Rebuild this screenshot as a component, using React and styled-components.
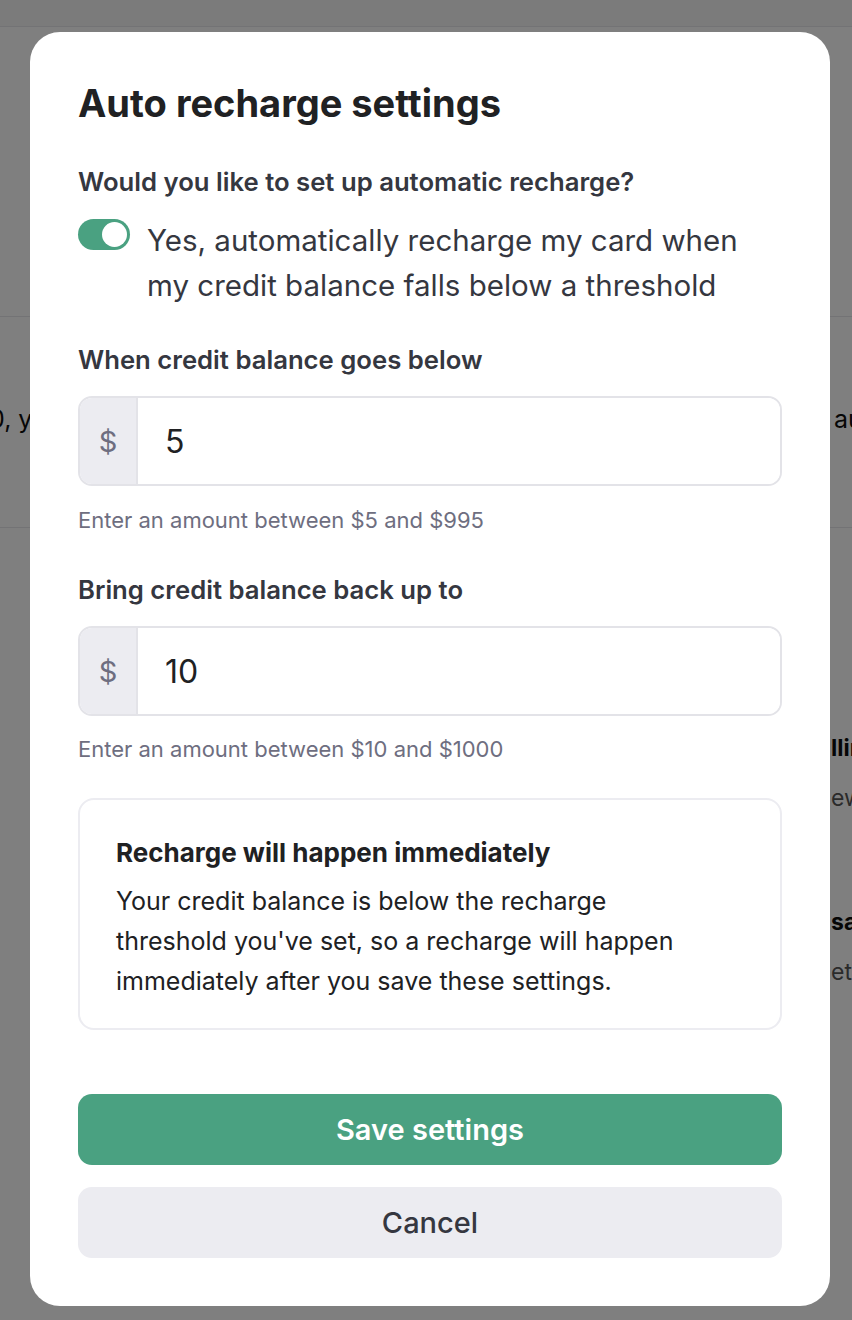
import { useState } from 'react';
import styled, { createGlobalStyle } from 'styled-components';

const GlobalStyle = createGlobalStyle`
  * {
    box-sizing: border-box;
  }
  body {
    margin: 0;
    background: #fff;
    color: #202123;
    font-family: Inter, "Noto Sans", sans-serif;
  }
`;

// page behind the dialog, mostly hidden by it
const Page = styled.div`
  height: 1320px;
  overflow: hidden;
  background: #fff;
`;

const TopBar = styled.div`
  height: 27px;
  background: #f6f6f7;
  border-bottom: 1px solid #e6e6ea;
`;

const Band = styled.div`
  height: ${({ h }) => h}px;
  border-bottom: ${({ line }) => (line ? '1px solid #e6e6ea' : 'none')};
  padding-top: ${({ top }) => top || 0}px;
`;

const SplitRow = styled.div`
  display: flex;
  justify-content: space-between;
  font-size: 25px;
  line-height: 30px;
  color: #0d0d0d;
  white-space: nowrap;
`;

const Clipped = styled.span`
  margin-left: ${({ left }) => left || 0}px;
  margin-right: ${({ right }) => right || 0}px;
`;

const Aside = styled.div`
  display: grid;
  grid-template-columns: 831px 1fr;
  padding-top: 205px;
`;

const AsideCol = styled.div`
  grid-column: 2;
  display: flex;
  flex-direction: column;
  white-space: nowrap;
`;

const AsideTitle = styled.div`
  font-size: 23px;
  line-height: 30px;
  font-weight: 700;
  color: #0d0d0d;
  margin-top: ${({ mt }) => mt || 0}px;
`;

const AsideText = styled.div`
  font-size: 23px;
  line-height: 28px;
  color: #555;
  margin-top: 21px;
`;

// dialog
const Overlay = styled.div`
  position: fixed;
  inset: 0;
  background: rgba(0, 0, 0, 0.5);
  display: flex;
  justify-content: center;
  align-items: flex-start;
  padding: 32px 0 0 8px;
`;

const Dialog = styled.div`
  width: 800px;
  height: 1274px;
  background: #fff;
  border-radius: 30px;
  padding: 50px 48px 48px;
  display: flex;
  flex-direction: column;
`;

const Title = styled.h2`
  margin: 0;
  font-size: 38px;
  line-height: 42px;
  font-weight: 700;
  color: #202123;
`;

const Label = styled.div`
  font-size: 25.7px;
  line-height: 30px;
  font-weight: 600;
  color: #353740;
  margin-top: ${({ mt }) => mt}px;
`;

const ToggleRow = styled.label`
  display: flex;
  gap: 17px;
  margin-top: 22px;
  cursor: pointer;
`;

const Track = styled.span`
  flex: none;
  width: 52px;
  height: 31px;
  border-radius: 16px;
  background: ${({ on }) => (on ? '#4aa181' : '#d9d9e3')};
  position: relative;
  transition: background 0.15s;
`;

const Knob = styled.span`
  position: absolute;
  top: 3px;
  left: ${({ on }) => (on ? '24px' : '3px')};
  width: 25px;
  height: 25px;
  border-radius: 50%;
  background: #fff;
  transition: left 0.15s;
`;

const ToggleText = styled.span`
  font-size: 29.5px;
  line-height: 45px;
  color: #353740;
  margin-top: -1px;
`;

const Field = styled.div`
  display: flex;
  flex: none;
  height: 90px;
  margin-top: 21px;
  border: 2px solid #e3e3e8;
  border-radius: 14px;
  overflow: hidden;
`;

const Prefix = styled.span`
  width: 58px;
  flex: none;
  display: flex;
  align-items: center;
  justify-content: center;
  background: #ececf1;
  border-right: 2px solid #e3e3e8;
  font-size: 29px;
  color: #6e6e80;
`;

const AmountInput = styled.input`
  flex: 1;
  min-width: 0;
  border: none;
  outline: none;
  padding: 0 27px;
  font-family: inherit;
  font-size: 32px;
  color: #202123;
  background: #fff;
`;

const Hint = styled.div`
  font-size: 22px;
  line-height: 28px;
  color: #6e6e80;
  margin-top: ${({ mt }) => mt}px;
`;

const Notice = styled.div`
  flex: none;
  margin-top: 35px;
  border: 2px solid #ececf1;
  border-radius: 16px;
  padding: 38px 36px 27px;
`;

const NoticeTitle = styled.div`
  font-size: 26px;
  line-height: 30px;
  font-weight: 700;
  color: #202123;
`;

const NoticeText = styled.p`
  margin: 13px 0 0;
  max-width: 590px;
  font-size: 25px;
  line-height: 40px;
  color: #202123;
`;

const Button = styled.button`
  height: 71px;
  width: 100%;
  flex: none;
  border: none;
  border-radius: 14px;
  font-family: inherit;
  font-size: 29px;
  font-weight: ${({ primary }) => (primary ? 600 : 500)};
  color: ${({ primary }) => (primary ? '#fff' : '#353740')};
  background: ${({ primary }) => (primary ? '#4aa181' : '#ececf1')};
  margin-top: ${({ mt }) => mt}px;
  cursor: pointer;
`;

function App() {
  const [auto, setAuto] = useState(true);
  const [below, setBelow] = useState('5');
  const [upTo, setUpTo] = useState('10');

  return (
    <>
      <GlobalStyle />
      <Page>
        <TopBar />
        <Band h={290} line />
        <Band h={211} line top={87}>
          <SplitRow>
            <Clipped left={-11}>0, y</Clipped>
            <Clipped right={-19}>aut</Clipped>
          </SplitRow>
        </Band>
        <Aside>
          <AsideCol>
            <AsideTitle>llin</AsideTitle>
            <AsideText>ew</AsideText>
            <AsideTitle mt={95}>sa</AsideTitle>
            <AsideText>et r</AsideText>
          </AsideCol>
        </Aside>
      </Page>

      <Overlay>
        <Dialog>
          <Title>Auto recharge settings</Title>

          <Label mt={43}>Would you like to set up automatic recharge?</Label>
          <ToggleRow onClick={() => setAuto(!auto)}>
            <Track on={auto ? 1 : 0}>
              <Knob on={auto ? 1 : 0} />
            </Track>
            <ToggleText>
              Yes, automatically recharge my card when my credit balance falls below a threshold
            </ToggleText>
          </ToggleRow>

          <Label mt={37}>When credit balance goes below</Label>
          <Field>
            <Prefix>$</Prefix>
            <AmountInput value={below} onChange={(e) => setBelow(e.target.value)} />
          </Field>
          <Hint mt={20}>Enter an amount between $5 and $995</Hint>

          <Label mt={41}>Bring credit balance back up to</Label>
          <Field>
            <Prefix>$</Prefix>
            <AmountInput value={upTo} onChange={(e) => setUpTo(e.target.value)} />
          </Field>
          <Hint mt={19}>Enter an amount between $10 and $1000</Hint>

          <Notice>
            <NoticeTitle>Recharge will happen immediately</NoticeTitle>
            <NoticeText>
              Your credit balance is below the recharge threshold you've set, so a recharge will happen
              immediately after you save these settings.
            </NoticeText>
          </Notice>

          <Button primary mt={64}>Save settings</Button>
          <Button mt={22}>Cancel</Button>
        </Dialog>
      </Overlay>
    </>
  );
}

export default App;
